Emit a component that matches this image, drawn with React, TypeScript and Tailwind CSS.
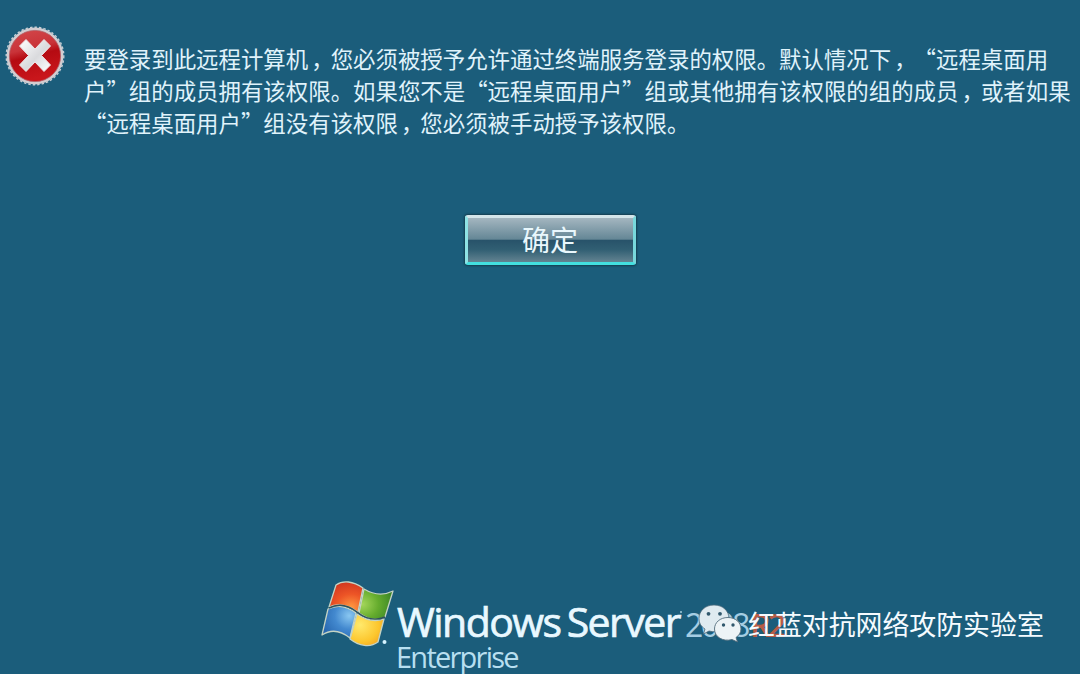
import type { ReactNode } from 'react'

function Comma() {
  return <span className="inline-block w-[22.43px] pl-[3px]">，</span>
}

function Line({ children }: { children: ReactNode }) {
  return <p className="h-8 whitespace-nowrap">{children}</p>
}

function ErrorIcon() {
  return (
    <svg className="block size-[62px]" viewBox="0 0 62 62">
      <defs>
        <linearGradient id="red" x1="0" y1="0" x2=".25" y2="1">
          <stop offset="0" stopColor="#d3484b" />
          <stop offset=".42" stopColor="#c93339" />
          <stop offset=".58" stopColor="#b50b12" />
          <stop offset="1" stopColor="#c9161b" />
        </linearGradient>
        <linearGradient id="cross" x1="0" y1="0" x2="1" y2="1">
          <stop offset="0" stopColor="#ffffff" />
          <stop offset=".55" stopColor="#d9dadd" />
          <stop offset="1" stopColor="#ffffff" />
        </linearGradient>
      </defs>
      <circle cx="31" cy="31" r="28.4" fill="#d3cdd1" />
      <circle cx="31" cy="31" r="28.8" fill="none" stroke="#c5ced5" strokeWidth="1.4" strokeDasharray="2.4 2.1" />
      <circle cx="31" cy="31" r="25.6" fill="url(#red)" stroke="#b35f67" strokeWidth=".8" />
      <path d="M22 14.5 31 24 40 14.5 46.5 21 37.5 30.5 46.5 40 40 46.5 31 37 22 46.5 15.5 40 24.5 30.5 15.5 21Z" fill="url(#cross)" stroke="#eee4e6" strokeWidth="1" strokeLinejoin="round" />
    </svg>
  )
}

function WindowsFlag() {
  return (
    <svg className="block h-[68px] w-[76px]" viewBox="0 0 76 68">
      <defs>
        <radialGradient id="flagRed" cx=".65" cy=".85" r=".9">
          <stop offset="0" stopColor="#ff9a42" /><stop offset=".5" stopColor="#ed5526" /><stop offset="1" stopColor="#cf3520" />
        </radialGradient>
        <radialGradient id="flagGreen" cx=".1" cy=".5" r=".95">
          <stop offset="0" stopColor="#a4d65a" /><stop offset=".5" stopColor="#65ac2d" /><stop offset="1" stopColor="#388326" />
        </radialGradient>
        <radialGradient id="flagBlue" cx=".8" cy=".3" r=".95">
          <stop offset="0" stopColor="#89c7f1" /><stop offset=".45" stopColor="#4389cf" /><stop offset="1" stopColor="#2361a9" />
        </radialGradient>
        <radialGradient id="flagYellow" cx=".3" cy=".35" r=".9">
          <stop offset="0" stopColor="#ffe96c" /><stop offset=".6" stopColor="#fcc62d" /><stop offset="1" stopColor="#ef9721" />
        </radialGradient>
      </defs>
      <g stroke="#c4d3c4" strokeWidth="1.3" strokeLinejoin="round">
        <path d="M15 5C22 0 32 1 42 8L37 32C27 25 17 23 8 27Z" fill="url(#flagRed)" />
        <path d="M43 9C53 15 62 16 72 11L64 37C55 42 45 38 38 33Z" fill="url(#flagGreen)" />
        <path d="M7 29C17 24 26 26 35 33L29 58C19 50 10 49 1 55Z" fill="url(#flagBlue)" />
        <path d="M36 34C46 41 55 42 63 39L57 62C49 68 38 66 29 59Z" fill="url(#flagYellow)" />
      </g>
      <path d="M8 28C18 23 27 25 36 32C45 39 55 41 64 37" fill="none" stroke="#30525b" strokeWidth="1.4" />
      <circle cx="63.5" cy="62" r="2" fill="#d5f3ff" />
    </svg>
  )
}

function WeChatIcon() {
  return (
    <svg className="block h-[40px] w-[44px]" viewBox="0 0 44 40">
      <path d="M16 1C7 1 1 7 1 14.5C1 19 3 22.5 7 25L5.5 30L11 27C21 30 31 24 31 14.5C31 7 25 1 16 1Z" fill="#dfeaf0" stroke="#47677a" strokeWidth=".8" />
      <path d="M30 13.5C22 13.5 16.5 18.5 16.5 25C16.5 33 25 38 34 35.5L39.5 38L38 33.5C41 31.5 43 28.5 43 25C43 18.5 37.5 13.5 30 13.5Z" fill="#edf3f6" stroke="#526c7c" strokeWidth=".9" />
      <g fill="#31586d">
        <circle cx="10.5" cy="9.8" r="1.9" /><circle cx="22" cy="9.8" r="1.9" />
        <circle cx="25.5" cy="21" r="1.7" /><circle cx="35" cy="21" r="1.7" />
      </g>
    </svg>
  )
}

export default function App() {
  return (
    <main className="relative flex h-[674px] w-[1080px] flex-col overflow-hidden bg-[#1b5d7b] font-['Noto_Sans_CJK_SC',sans-serif]">
      <section className="flex h-[215px] pl-1 pt-[25px]">
        <ErrorIcon />
        <div className="ml-[18px] pt-[17px] text-[22.43px] leading-8 text-[#e0f3fb]">
          <Line>要登录到此远程计算机<Comma />您必须被授予允许通过终端服务登录的权限。默认情况下<Comma />“远程桌面用</Line>
          <Line>户”组的成员拥有该权限。如果您不是“远程桌面用户”组或其他拥有该权限的组的成员<Comma />或者如果</Line>
          <Line>“远程桌面用户”组没有该权限<Comma />您必须被手动授予该权限。</Line>
        </div>
      </section>

      <div className="flex justify-center pl-5">
        <button className="h-[50px] w-[171px] rounded-[3px] border-[3px] border-t-[#d4e5ea] border-r-[#78d8dc] border-b-[#43dfdf] border-l-[#8ee2e4] bg-[linear-gradient(to_bottom,#a4b6c0_0%,#658796_48%,#28536a_51%,#315f73_72%,#638391_100%)] pb-[3px] text-[28px] leading-none text-[#e9f7fc] shadow-[0_0_2px_1px_#153e4f]">
          确定
        </button>
      </div>

      <footer className="mt-auto flex h-[94px] pl-[321px]">
        <WindowsFlag />
        <div className="flex flex-col whitespace-nowrap pt-[16px] font-['Open_Sans','Noto_Sans',sans-serif]">
          <div className="flex h-[46px] items-baseline leading-[50px]">
            <span className="w-[282px] text-[41px] tracking-[-1.55px] [word-spacing:-3px] text-[#e9f8ff] [-webkit-text-stroke:0.7px_#e9f8ff]">Windows Server</span>
            <span className="mt-[15px] ml-px size-[2px] self-start rounded-full bg-[#a5cddd]" />
            <span className="ml-[3px] w-[65px] text-[32px] tracking-[-2.6px] text-[#a5cde3]">2008</span>
            <span className="text-[32px] font-semibold tracking-[-3px] text-[#b75c46]">R2</span>
          </div>
          <span className="-mt-[2px] -ml-px text-[29px] leading-[34px] tracking-[-1.75px] text-[#b8dff0]">Enterprise</span>
        </div>
      </footer>

      <div className="absolute left-[698px] top-[604px] flex">
        <WeChatIcon />
        <span className="ml-[6px] whitespace-nowrap text-[26.9px] leading-[40px] text-[#f5fbff]">红蓝对抗网络攻防实验室</span>
      </div>
    </main>
  )
}
